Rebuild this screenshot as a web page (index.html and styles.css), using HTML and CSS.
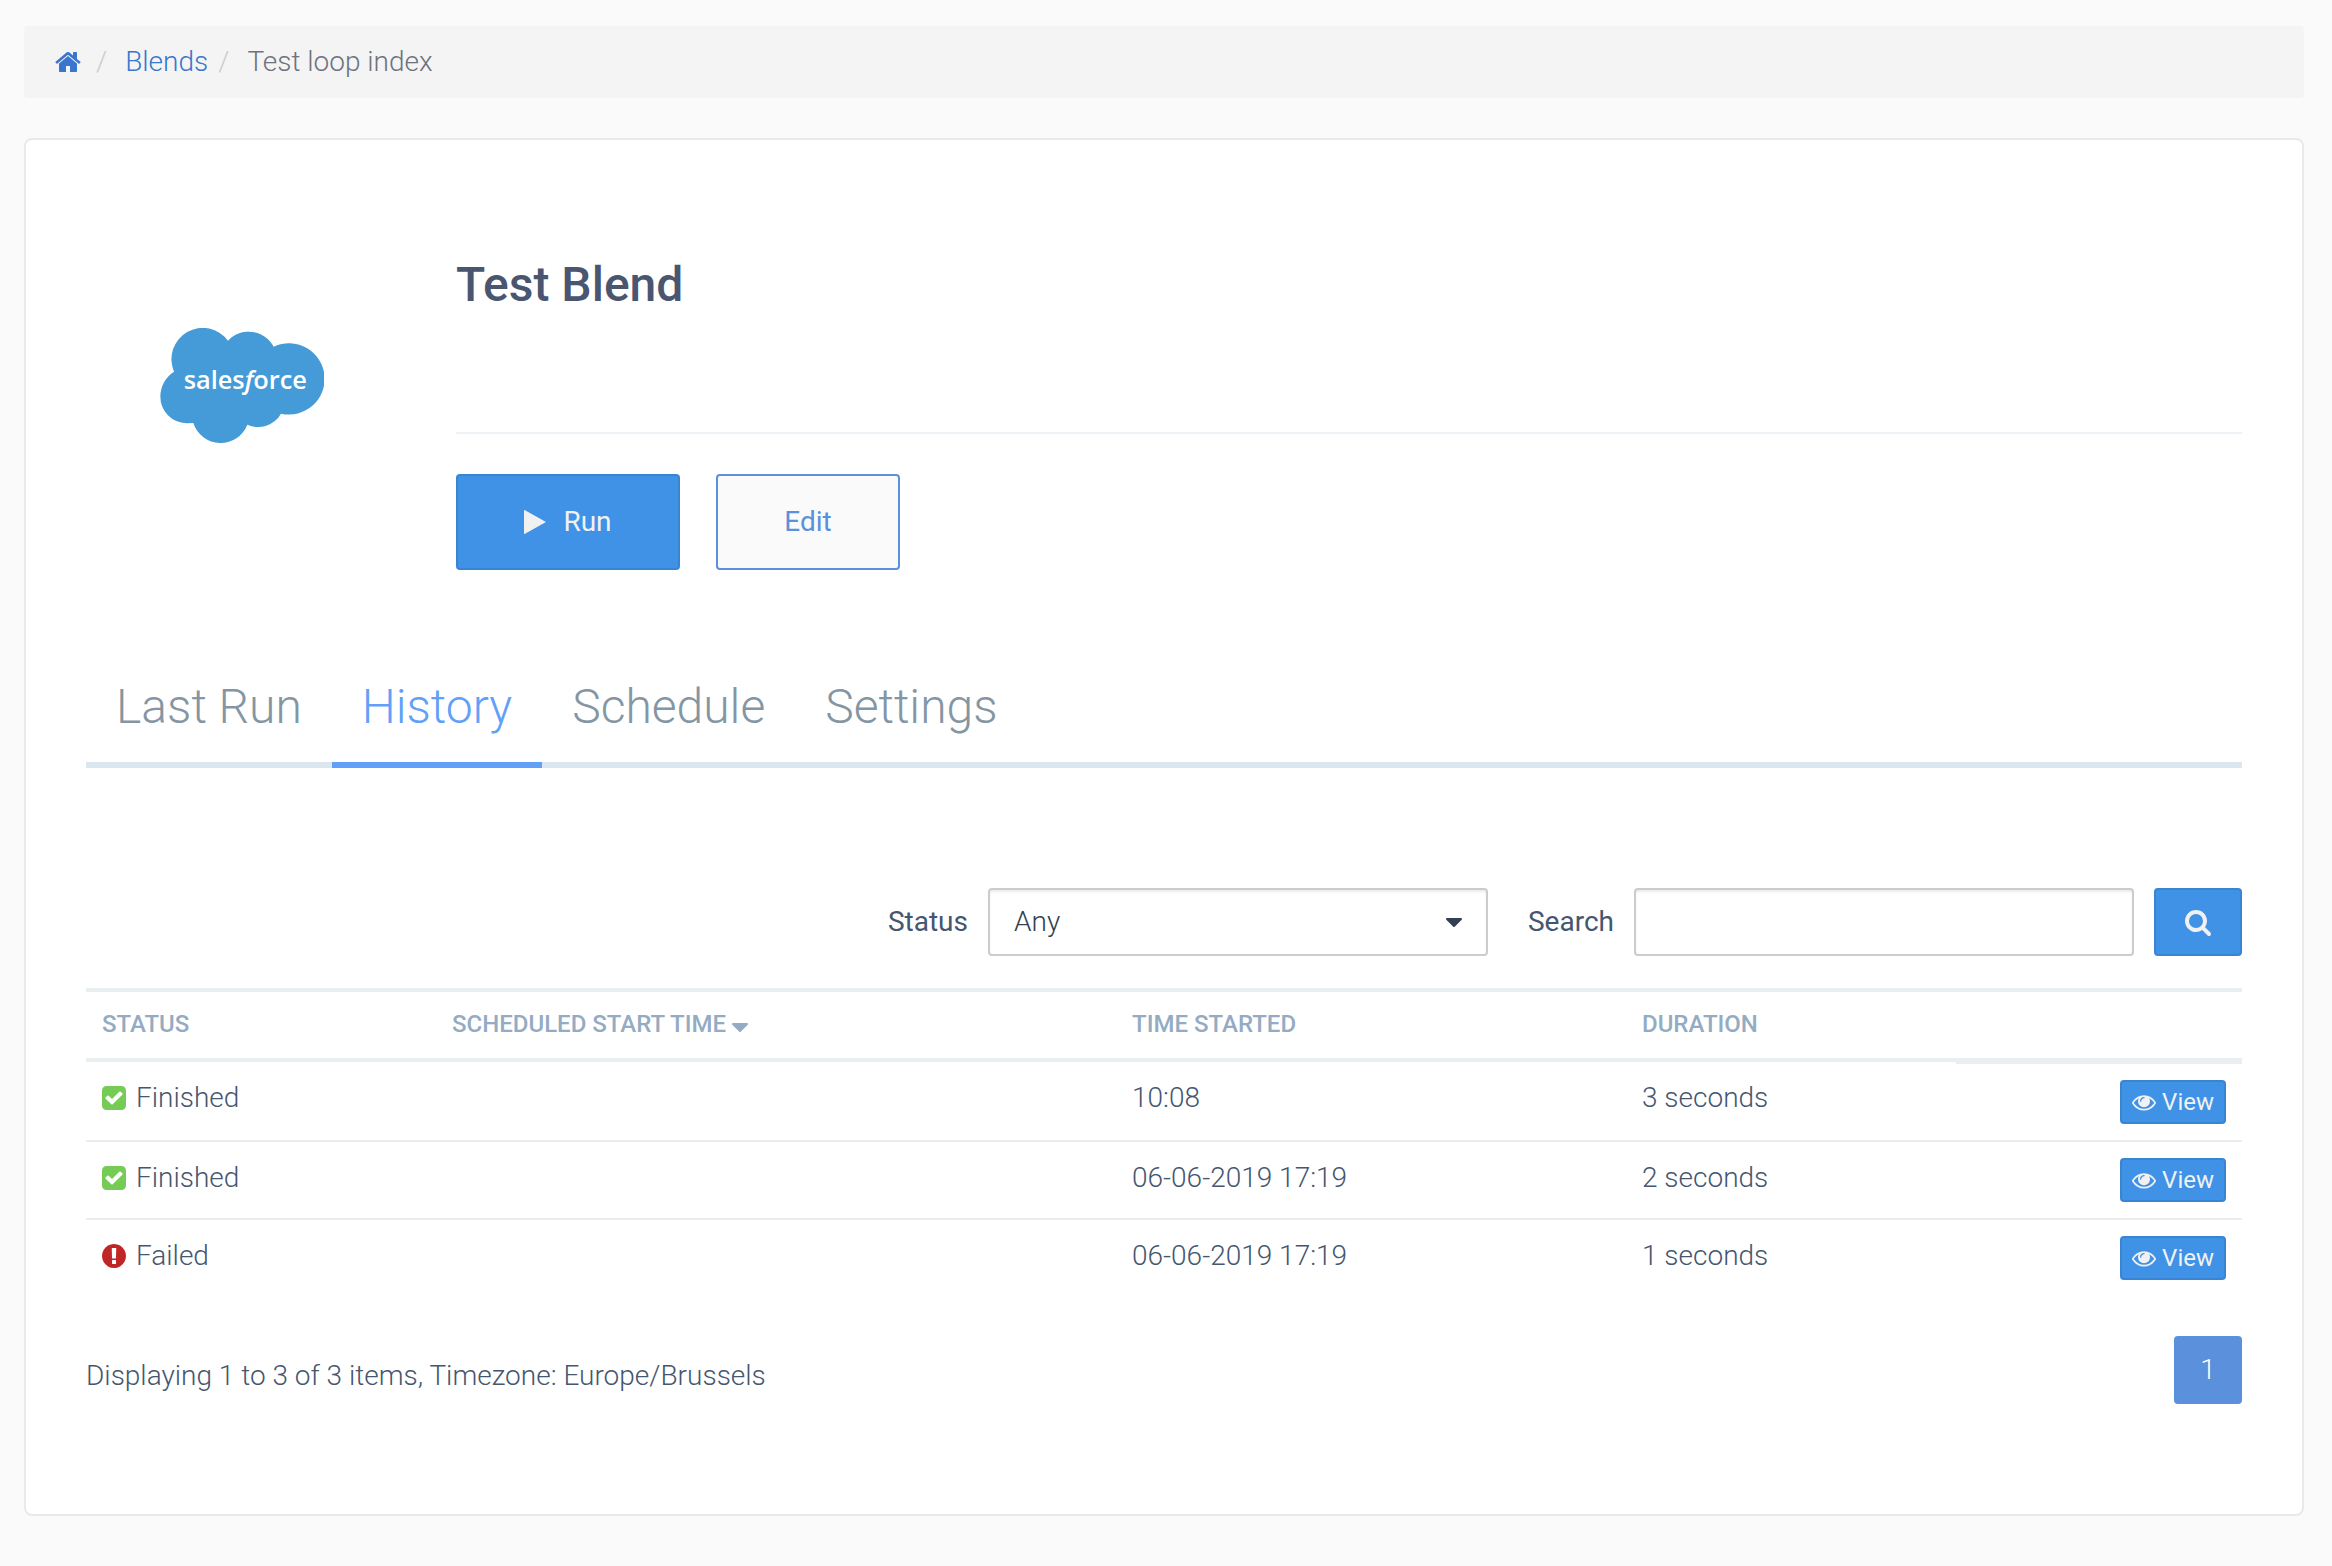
FILE: index.html
```html
<!DOCTYPE html>
<html lang="en">
<head>
<meta charset="utf-8">
<meta name="viewport" content="width=device-width, initial-scale=1">
<title>Test Blend</title>
<link rel="stylesheet" href="styles.css">
</head>
<body>
<svg class="sprite" aria-hidden="true">
  <symbol id="i-home" viewBox="0 0 1792 1792"><path d="M1472 992v480q0 26-19 45t-45 19h-384v-384h-256v384h-384q-26 0-45-19t-19-45v-480q0-1 .5-3t.5-3l575-474 575 474q1 2 1 6zm223-69l-62 74q-8 9-21 11h-3q-13 0-21-7l-692-577-692 577q-12 8-24 7-13-2-21-11l-62-74q-8-10-7-23.500t11-21.500l719-599q32-26 76-26t76 26l244 204v-195q0-14 9-23t23-9h192q14 0 23 9t9 23v408l219 182q10 8 11 21.500t-7 23.500z"/></symbol>
  <symbol id="i-eye" viewBox="0 0 1792 1792"><path d="M1664 960q-152-236-381-353 61 104 61 225 0 185-131.500 316.500t-316.500 131.500-316.500-131.500-131.500-316.500q0-121 61-225-229 117-381 353 133 205 333.500 326.500t434.500 121.500 434.500-121.500 333.500-326.500zm-720-384q0-20-14-34t-34-14q-125 0-214.500 89.500t-89.500 214.500q0 20 14 34t34 14 34-14 14-34q0-86 61-147t147-61q20 0 34-14t14-34zm848 384q0 34-20 69-140 230-376.500 368.500t-499.500 138.500-499.500-139-376.500-368q-20-35-20-69t20-69q140-229 376.500-368t499.500-139 499.500 139 376.500 368q20 35 20 69z"/></symbol>
  <symbol id="i-search" viewBox="0 0 1792 1792"><path d="M1216 832q0-185-131.500-316.500t-316.500-131.500-316.500 131.500-131.500 316.500 131.500 316.500 316.500 131.500 316.500-131.500 131.500-316.500zm512 832q0 52-38 90t-90 38q-54 0-90-38l-343-342q-179 124-399 124-143 0-273.500-55.500t-225-150-150-225-55.500-273.500 55.500-273.500 150-225 225-150 273.500-55.500 273.500 55.500 225 150 150 225 55.500 273.500q0 220-124 399l343 343q37 37 37 90z"/></symbol>
  <symbol id="i-check" viewBox="128 128 1536 1536"><path d="M813 1299l614-614q19-19 19-45t-19-45l-102-102q-19-19-45-19t-45 19l-467 467-211-211q-19-19-45-19t-45 19l-102 102q-19 19-19 45t19 45l358 358q19 19 45 19t45-19zm851-883v960q0 119-84.500 203.500t-203.500 84.500h-960q-119 0-203.500-84.500t-84.500-203.500v-960q0-119 84.500-203.500t203.500-84.500h960q119 0 203.500 84.500t84.500 203.500z"/></symbol>
  <symbol id="i-alert" viewBox="128 128 1536 1536"><path d="M896 128q209 0 385.500 103t279.500 279.500 103 385.500-103 385.500-279.500 279.500-385.500 103-385.500-103-279.500-279.500-103-385.500 103-385.500 279.500-279.500 385.500-103zm128 1247v-190q0-14-9-23.500t-22-9.500h-192q-13 0-23 10t-10 23v190q0 13 10 23t23 10h192q13 0 22-9.500t9-23.500zm-2-344l18-621q0-12-10-18-10-8-24-8h-220q-14 0-24 8-10 6-10 18l17 621q0 10 10 17.500t24 7.500h185q14 0 23.500-7.500t10.500-17.500z"/></symbol>
  <symbol id="i-caret" viewBox="0 0 16 9"><path d="M1 0h14q1 0 1 1 0 .4-.3.700l-7 7q-.3.300-.7.300t-.7-.3l-7-7Q0 1.400 0 1q0-1 1-1z"/></symbol>
  <symbol id="i-play" viewBox="0 0 22 24"><path d="M.6 0L22 12 .6 24Q0 24 0 23V1Q0 0 .6 0z"/></symbol>
</svg>

<nav class="breadcrumb" aria-label="Breadcrumb">
  <a class="crumb-home" href="#" aria-label="Home"><svg class="icon"><use href="#i-home"/></svg></a>
  <span class="slash">/</span>
  <a href="#">Blends</a>
  <span class="slash">/</span>
  <span>Test loop index</span>
</nav>

<main class="card">
  <header class="hero">
    <div class="hero-logo">
      <svg class="logo" viewBox="0 0 492 345" role="img" aria-label="salesforce">
        <g transform="translate(-89 -85)">
          <path fill="#459bd7" d="M131 216A94 94 0 0 1 293 123A85 85 0 0 1 430 141A107 107 0 1 1 452 342A78 78 0 0 1 351 375A86 86 0 0 1 189 370L168 371A80 80 0 0 1 90 291A88 88 0 0 1 131 216Z"/>
          <text class="logo-text" x="160" y="268">sales<tspan font-style="italic">f</tspan>orce</text>
        </g>
      </svg>
    </div>
    <div class="hero-body">
      <h1>Test Blend</h1>
      <hr>
      <div class="actions">
        <button class="btn btn-run" type="button"><svg class="play"><use href="#i-play"/></svg>Run</button>
        <button class="btn btn-edit" type="button">Edit</button>
      </div>
    </div>
  </header>

  <nav class="tabs">
    <a href="#">Last Run</a>
    <a class="active" href="#" aria-current="page">History</a>
    <a href="#">Schedule</a>
    <a href="#">Settings</a>
  </nav>

  <form class="filters">
    <div class="field">
      <label for="status">Status</label>
      <div class="select">
        <select class="control" id="status"><option>Any</option></select>
        <svg class="caret"><use href="#i-caret"/></svg>
      </div>
    </div>
    <div class="field">
      <label for="search">Search</label>
      <input class="control" id="search" type="text">
    </div>
    <button class="btn btn-search" type="button" aria-label="Search"><svg class="icon"><use href="#i-search"/></svg></button>
  </form>

  <table class="runs">
    <colgroup><col class="c-status"><col class="c-scheduled"><col class="c-started"><col class="c-duration"><col></colgroup>
    <thead>
      <tr><th>STATUS</th><th>SCHEDULED START TIME <svg class="caret-sort"><use href="#i-caret"/></svg></th><th>TIME STARTED</th><th>DURATION</th><th></th></tr>
    </thead>
    <tbody>
      <tr>
        <td><span class="state"><svg class="ok"><use href="#i-check"/></svg>Finished</span></td><td></td><td>10:08</td><td>3 seconds</td>
        <td class="row-action"><button class="btn btn-view" type="button"><svg><use href="#i-eye"/></svg>View</button></td>
      </tr>
      <tr>
        <td><span class="state"><svg class="ok"><use href="#i-check"/></svg>Finished</span></td><td></td><td>06-06-2019 17:19</td><td>2 seconds</td>
        <td class="row-action"><button class="btn btn-view" type="button"><svg><use href="#i-eye"/></svg>View</button></td>
      </tr>
      <tr>
        <td><span class="state"><svg class="bad"><use href="#i-alert"/></svg>Failed</span></td><td></td><td>06-06-2019 17:19</td><td>1 seconds</td>
        <td class="row-action"><button class="btn btn-view" type="button"><svg><use href="#i-eye"/></svg>View</button></td>
      </tr>
    </tbody>
  </table>

  <footer class="pager">
    <p>Displaying 1 to 3 of 3 items, Timezone: Europe/Brussels</p>
    <a class="page" href="#" aria-current="page">1</a>
  </footer>
</main>
</body>
</html>
```

FILE: styles.css
```css
* { box-sizing: border-box; }

body {
  margin: 0;
  padding: 26px 28px 50px 24px;
  background: #fafafa;
  color: #45566f;
  font: 300 28px/40px Roboto, "Liberation Sans", sans-serif;
}

a { text-decoration: none; }
svg { display: block; flex: none; fill: currentColor; }
button, input, select { font: inherit; }
.sprite { position: absolute; width: 0; height: 0; }
.icon { width: 28px; height: 28px; }

/* Breadcrumb */
.breadcrumb {
  display: flex;
  align-items: center;
  padding: 16px 30px;
  border-radius: 4px;
  background: #f4f4f4;
  color: #6e727c;
}
.breadcrumb a { color: #3a76ce; }
.breadcrumb .crumb-home { margin-right: 4px; }
.slash { padding: 0 18px 0 10px; color: #ccc; }

/* Card */
.card {
  margin-top: 40px;
  padding: 106px 60px 110px;
  border: 2px solid #e6eaed;
  border-radius: 8px;
  background: #fff;
}

/* Hero */
.hero { display: flex; }
.hero-logo { flex: none; width: 370px; padding: 82px 0 0 74px; }
.logo { width: 164px; height: 115px; }
.logo-text { fill: #fff; font: 600 76px "Open Sans", sans-serif; }
.hero-body { flex: 1; }
h1 {
  margin: 0;
  color: #4a5670;
  font-size: 48px;
  font-weight: 500;
  line-height: 78px;
}
hr { margin: 108px 0 40px; border: 0; border-top: 2px solid #eef3f8; }
.actions { display: flex; gap: 36px; }

.btn {
  display: inline-flex;
  align-items: center;
  justify-content: center;
  border: 2px solid #3a84d4;
  border-radius: 4px;
  background: #3f92e6;
  color: #f1f1f1;
  font-weight: 400;
}
.btn-run { gap: 17px; width: 224px; height: 96px; padding: 0; }
.btn-edit { width: 184px; height: 96px; padding: 0; border-color: #5a90dc; background: #fafafa; color: #5a90dc; }
.play { width: 22px; height: 24px; }

/* Tabs */
.tabs { display: flex; margin-top: 80px; border-bottom: 6px solid #dbe7ef; }
.tabs a {
  margin-bottom: -6px;
  padding: 20px 30px 18px;
  border-bottom: 6px solid transparent;
  color: #8496a3;
  font-size: 48px;
  line-height: 74px;
}
.tabs .active { border-color: #619ff8; color: #619ff8; }

/* Filters */
.filters { display: flex; justify-content: flex-end; gap: 20px; margin-top: 120px; }
.field { display: flex; align-items: center; gap: 20px; }
.field + .field { margin-left: 20px; }
.field label { font-weight: 400; }
.select { position: relative; }
.control {
  display: block;
  width: 500px;
  height: 68px;
  padding: 0 24px;
  border: 2px solid #ccc;
  border-radius: 4px;
  background: #fff;
  box-shadow: inset 0 2px 2px rgba(0, 0, 0, .08);
  color: #333f52;
  appearance: none;
}
.caret { position: absolute; top: 30px; right: 26px; width: 16px; height: 9px; color: #333f52; pointer-events: none; }
.btn-search { width: 88px; height: 68px; padding: 0; }

/* Runs table */
.runs { width: 100%; margin-top: 32px; border-collapse: separate; border-spacing: 0; table-layout: fixed; }
.c-status { width: 350px; }
.c-scheduled { width: 680px; }
.c-started { width: 510px; }
.c-duration { width: 330px; }
th {
  padding: 16px 16px 18px;
  border: solid #e9eef1;
  border-width: 4px 0;
  color: #94abc4;
  font-size: 24px;
  font-weight: 500;
  line-height: 32px;
  text-align: left;
}
td { padding: 16px; border-bottom: 2px solid #e9eef1; vertical-align: top; }
tr:last-child td { border-bottom: 0; }
.caret-sort { display: inline-block; width: 16px; height: 9px; }
.state { display: flex; align-items: center; gap: 10px; }
.state svg { width: 24px; height: 24px; }
.ok { color: #74cc54; }
.bad { color: #c12626; }
.row-action { text-align: right; }
tbody tr:first-child .row-action { border-top: 2px solid #e9eef1; }
.btn-view { gap: 6px; height: 44px; padding: 0 10px; font-size: 24px; line-height: 40px; vertical-align: top; }
.btn-view svg { width: 24px; height: 24px; }

/* Pager */
.pager { display: flex; justify-content: space-between; margin-top: 40px; }
.pager p { margin: 20px 0 0; }
.page {
  width: 68px;
  height: 68px;
  border-radius: 4px;
  background: #5a90dc;
  color: #fff;
  line-height: 68px;
  text-align: center;
}
```
